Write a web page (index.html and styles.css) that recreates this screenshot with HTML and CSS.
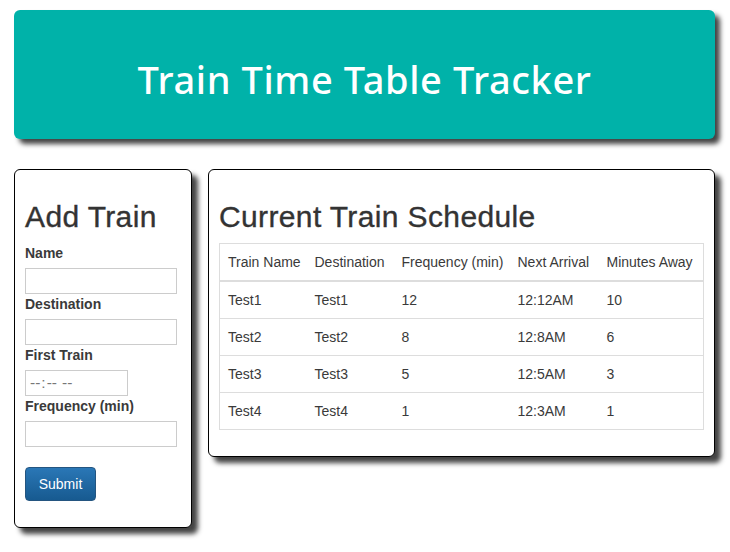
FILE: index.html
```html
<!DOCTYPE html>
<html lang="en">
<head>
<meta charset="utf-8">
<title>Train Time Table Tracker</title>
<link rel="stylesheet" href="styles.css">
</head>
<body>
<div class="page">
  <header class="jumbotron"><h1>Train Time Table Tracker</h1></header>
  <main class="columns">
    <section class="panel panel-form">
      <h2>Add Train</h2>
      <form class="train-form">
        <label for="name">Name</label>
        <input id="name" class="field" type="text">
        <label for="dest">Destination</label>
        <input id="dest" class="field" type="text">
        <label for="first">First Train</label>
        <input id="first" class="field field-time" type="time">
        <label for="freq">Frequency (min)</label>
        <input id="freq" class="field" type="text">
        <button class="submit" type="button">Submit</button>
      </form>
    </section>
    <section class="panel panel-table">
      <h2>Current Train Schedule</h2>
      <table class="schedule">
        <thead>
          <tr><th>Train Name</th><th>Destination</th><th>Frequency (min)</th><th>Next Arrival</th><th>Minutes Away</th></tr>
        </thead>
        <tbody>
          <tr><td>Test1</td><td>Test1</td><td>12</td><td>12:12AM</td><td>10</td></tr>
          <tr><td>Test2</td><td>Test2</td><td>8</td><td>12:8AM</td><td>6</td></tr>
          <tr><td>Test3</td><td>Test3</td><td>5</td><td>12:5AM</td><td>3</td></tr>
          <tr><td>Test4</td><td>Test4</td><td>1</td><td>12:3AM</td><td>1</td></tr>
        </tbody>
      </table>
    </section>
  </main>
</div>
</body>
</html>
```
FILE: styles.css
```css
* { box-sizing: border-box; }
html, body { margin: 0; padding: 0; background: #fff; }
body {
  font-family: "Liberation Sans", Arial, sans-serif;
  font-size: 14px;
  line-height: 20px;
  color: #3a3a3a;
}
.page { padding: 10px 15px 0 14px; width: 730px; min-height: 552px; }
.jumbotron {
  height: 129px;
  padding-top: 8px;
  background: #00b2a9;
  border-radius: 6px;
  box-shadow: 5px 5px 5px #444;
  display: flex;
  align-items: center;
  justify-content: center;
  margin-bottom: 30px;
}
.jumbotron h1 {
  margin: 0;
  font-family: "Noto Sans", sans-serif;
  font-weight: 500;
  font-size: 38px;
  line-height: 40px;
  letter-spacing: 0.6px;
  color: #fff;
}
.columns { display: flex; align-items: flex-start; gap: 16px; }
.panel {
  background: #fff;
  border: 1px solid #000;
  border-radius: 6px;
  box-shadow: 6px 6px 5px #444;
  padding: 10px;
}
.panel h2 {
  margin: 20px 0 10px;
  font-size: 30px;
  font-weight: 400;
  line-height: 33px;
  letter-spacing: 0.37px;
  -webkit-text-stroke: 0.35px #333;
  color: #333;
}
.panel-form { width: 178px; height: 359px; }
.panel-table { width: 507px; height: 288px; }
.train-form { display: flex; flex-direction: column; align-items: flex-start; }
.train-form label { font-weight: 700; margin-bottom: 5px; line-height: 20px; }
.field {
  display: block;
  width: 152px;
  height: 26px;
  border: 1px solid #ccc;
  background: #fff;
  padding: 1px 3px;
  margin: 0;
  border-radius: 0;
  font-family: "Liberation Sans", Arial, sans-serif;
  font-size: 15.5px;
  color: #777;
}
.field-time { width: 103px; letter-spacing: 0.3px; }
.field-time::-webkit-calendar-picker-indicator { display: none; }
.submit {
  margin-top: 20px;
  width: 71px;
  height: 34px;
  border: 1px solid #245580;
  border-radius: 4px;
  background: linear-gradient(#2a77b6, #175a90);
  color: #fff;
  font-family: "Liberation Sans", Arial, sans-serif;
  font-size: 14px;
  padding: 0;
}
.schedule {
  width: 485px;
  table-layout: fixed;
  border-collapse: collapse;
  border: 1px solid #ddd;
}
.schedule th, .schedule td {
  padding: 8px;
  border: 1px solid #ddd;
  border-left: 0;
  border-right: 0;
  text-align: left;
  font-weight: 400;
  vertical-align: top;
  line-height: 20px;
  white-space: nowrap;
}
.schedule th { border-bottom: 2px solid #ddd; }
.schedule th:nth-child(1) { width: 87px; }
.schedule th:nth-child(2) { width: 87px; }
.schedule th:nth-child(3) { width: 116px; }
.schedule th:nth-child(4) { width: 89px; }
```
